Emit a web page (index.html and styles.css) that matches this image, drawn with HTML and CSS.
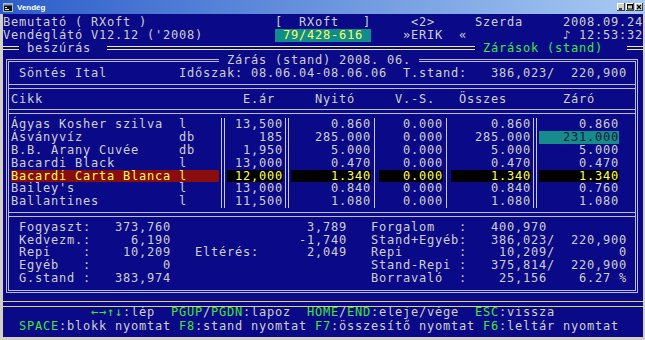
FILE: index.html
```html
<!DOCTYPE html>
<html lang="hu">
<head>
    <meta charset="UTF-8">
    <title>Vendég</title>
    <link rel="stylesheet" href="styles.css">
</head>
<body>
    <div class="window">
        <div class="titlebar">
            <svg class="app-icon" width="10" height="9" viewBox="0 0 10 9">
                <rect x="0.5" y="0.5" width="9" height="8" fill="#101010" stroke="#b8b8b8"/>
                <rect x="1" y="1" width="8" height="1.5" fill="#7f9fcf"/>
                <path d="M2 4.5h2M2 6.5h4" stroke="#e8e8e8"/>
            </svg>
            <span class="title">Vendég</span>
            <div class="controls">
                <span class="ctl"><svg width="8" height="8" viewBox="0 0 8 8"><path d="M2 6h3" stroke="#000" stroke-width="1.4"/></svg></span>
                <span class="ctl"><svg width="8" height="8" viewBox="0 0 8 8"><rect x="1.5" y="1.5" width="5" height="4.5" fill="none" stroke="#000"/><path d="M1.5 2h5" stroke="#000"/></svg></span>
                <span class="ctl"><svg width="8" height="8" viewBox="0 0 8 8"><path d="M2 2l4 4M6 2l-4 4" stroke="#000" stroke-width="1.2"/></svg></span>
            </div>
        </div>

        <div class="console">
            <!-- header -->
            <div class="row">Bemutató ( RXoft )                [  RXoft   ]     &lt;2&gt;     Szerda     2008.09.24</div>
            <div class="row">Vendéglátó V12.12 ('2008)         <span class="cell phone"> 79/428-616 </span>    »ERIK  «            ♪ 12:53:32</div>
            <div class="row bar-row"><span class="dline"></span><span> beszúrás  </span><span class="dline grow"></span><span class="mode"> Zárások (stand)   </span><span class="dline"></span></div>

            <!-- zárás frame -->
            <div class="frame">
                <div class="frame-top"><span class="corner corner-l"></span><span class="frame-title"> Zárás (stand) 2008. 06. </span><span class="corner corner-r"></span></div>
                <div class="frame-body">
                    <div class="row"> Söntés Ital         Időszak: 08.06.04-08.06.06  T.stand:   386,023/  220,900 </div>
                    <div class="sep"></div>
                    <div class="row">Cikk                         E.ár     Nyitó     V.-S.   Összes       Záró     </div>
                    <div class="sep"></div>
                    <div class="row">Ágyas Kosher szilva  l    <span class="vd"></span> 13,500<span class="vd"></span>     0.860<span class="vs"></span>   0.000<span class="vs"></span>     0.860<span class="vd"></span>     0.860  </div>
                    <div class="row">Ásványvíz            db   <span class="vd"></span>    185<span class="vd"></span>   285.000<span class="vs"></span>   0.000<span class="vs"></span>   285.000<span class="vd"></span><span class="cell focus">   231.000</span>  </div>
                    <div class="row">B.B. Arany Cuvée     db   <span class="vd"></span>  1,950<span class="vd"></span>     5.000<span class="vs"></span>   0.000<span class="vs"></span>     5.000<span class="vd"></span>     5.000  </div>
                    <div class="row">Bacardi Black        l    <span class="vd"></span> 13,000<span class="vd"></span>     0.470<span class="vs"></span>   0.000<span class="vs"></span>     0.470<span class="vd"></span>     0.470  </div>
                    <div class="row"><span class="cell hl-name">Bacardi Carta Blanca l    </span><span class="vd"></span><span class="cell hl"> 12,000</span><span class="vd"></span><span class="cell hl">     1.340</span><span class="vs"></span><span class="cell hl">   0.000</span><span class="vs"></span><span class="cell hl">     1.340</span><span class="vd"></span><span class="cell hl">     1.340</span>  </div>
                    <div class="row">Bailey's             l    <span class="vd"></span> 13,000<span class="vd"></span>     0.840<span class="vs"></span>   0.000<span class="vs"></span>     0.840<span class="vd"></span>     0.760  </div>
                    <div class="row">Ballantines          l    <span class="vd"></span> 11,500<span class="vd"></span>     1.080<span class="vs"></span>   0.000<span class="vs"></span>     1.080<span class="vd"></span>     1.080  </div>
                    <div class="sep"></div>
                    <div class="row"> Fogyaszt:   373,760                 3,789   Forgalom   :   400,970           </div>
                    <div class="row"> Kedvezm.:     6,190                -1,740   Stand+Egyéb:   386,023/  220,900 </div>
                    <div class="row"> Repi    :    10,209   Eltérés:      2,049   Repi       :    10,209/        0 </div>
                    <div class="row"> Egyéb   :         0                         Stand-Repi :   375,814/  220,900 </div>
                    <div class="row"> G.stand :   383,974                         Borravaló  :    25,156    6.27 % </div>
                </div>
            </div>

            <!-- key help -->
            <div class="key-sep"></div>
            <div class="row key-row">           <span class="key">←→↑↓</span>:lép  <span class="key">PGUP</span>/<span class="key">PGDN</span>:lapoz  <span class="key">HOME</span>/<span class="key">END</span>:eleje/vége  <span class="key">ESC</span>:vissza</div>
            <div class="row key-row">  <span class="key">SPACE</span>:blokk nyomtat <span class="key">F8</span>:stand nyomtat <span class="key">F7</span>:összesítő nyomtat <span class="key">F6</span>:leltár nyomtat</div>
        </div>
    </div>
</body>
</html>
```

FILE: styles.css
```css
* {
    margin: 0;
    padding: 0;
    box-sizing: border-box;
}

body {
    width: 645px;
    height: 340px;
    overflow: hidden;
    background: #d4d0c8;
}

.window {
    width: 645px;
    height: 340px;
    display: flex;
    flex-direction: column;
    background: #d4d0c8;
}

/* title bar */
.titlebar {
    height: 14px;
    flex-shrink: 0;
    display: flex;
    align-items: center;
    padding: 0 2px 0 3px;
    background: linear-gradient(to right, #2b5dca, #a8caf2);
}

.app-icon {
    flex-shrink: 0;
}

.title {
    margin-left: 4px;
    color: #fff;
    font: bold 8px "Liberation Sans", Arial, sans-serif;
}

.controls {
    margin-left: auto;
    display: flex;
    gap: 1px;
}

.ctl {
    width: 8px;
    height: 8px;
    display: flex;
    background: #d4d0c8;
    box-shadow: inset -1px -1px #404040, inset 1px 1px #fff;
}

/* console screen */
.console {
    flex: 1;
    margin: 0 2px 3px 3px;
    padding-top: 2px;
    background: #0a0a88;
    color: #cfcfcf;
    font-family: "DejaVu Sans Mono", monospace;
    font-size: 12px;
    letter-spacing: 0.7754px;
    line-height: 12.8px;
}

.row {
    height: 12.8px;
    white-space: pre;
}

.cell {
    display: inline-block;
    vertical-align: top;
    height: 12.8px;
}

.phone {
    background: #0f8c8c;
    color: #ffff55;
}

.focus {
    background: #168c8c;
    color: #08203c;
}

.hl-name {
    background: #8a0c0c;
    color: #ffff55;
}

.hl {
    background: #000;
    color: #ffff55;
}

/* column separators, one character cell wide */
.vd,
.vs {
    display: inline-block;
    vertical-align: top;
    width: 8px;
    height: 12.8px;
}

.vd {
    background: linear-gradient(to right, transparent 2px, #c8c8d4 2px, #c8c8d4 3px, transparent 3px, transparent 5px, #c8c8d4 5px, #c8c8d4 6px, transparent 6px);
}

.vs {
    background: linear-gradient(to right, transparent 3px, #c8c8d4 3px, #c8c8d4 4px, transparent 4px);
}

.bar-row {
    display: flex;
    align-items: center;
}

.dline {
    width: 16px;
    height: 4px;
    border-top: 1px solid #ececb8;
    border-bottom: 1px solid #ececb8;
}

.dline.grow {
    flex: 1;
}

.mode {
    color: #3ce63c;
}

/* frame */
.frame {
    margin: 0 5px 4.9px 3px;
}

.frame-top {
    display: flex;
    height: 12.8px;
}

.corner {
    align-self: flex-end;
    height: 7.9px;
    border-top: 3px double #bcbcd8;
}

.corner-l {
    width: 213px;
    border-left: 3px double #bcbcd8;
}

.corner-r {
    flex: 1;
    border-right: 3px double #bcbcd8;
}

.frame-title {
    white-space: pre;
}

.frame-body {
    border: 3px double #bcbcd8;
    border-top: 0;
    padding-bottom: 4.9px;
}

.frame-body .row {
    padding-left: 2px;
}

.sep {
    height: 12.8px;
    display: flex;
    align-items: center;
}

.sep::before {
    content: "";
    flex: 1;
    height: 3px;
    border-top: 1px solid #bcbcd8;
    border-bottom: 1px solid #bcbcd8;
}

/* key help */
.key-sep {
    height: 7px;
    padding-top: 3px;
}

.key-sep::before {
    content: "";
    display: block;
    height: 4px;
    border-top: 1px solid #d8d868;
    border-bottom: 1px solid #d8d868;
}

.key-row {
    height: 14.4px;
    line-height: 14.4px;
}

.key {
    color: #3ce63c;
}
```
